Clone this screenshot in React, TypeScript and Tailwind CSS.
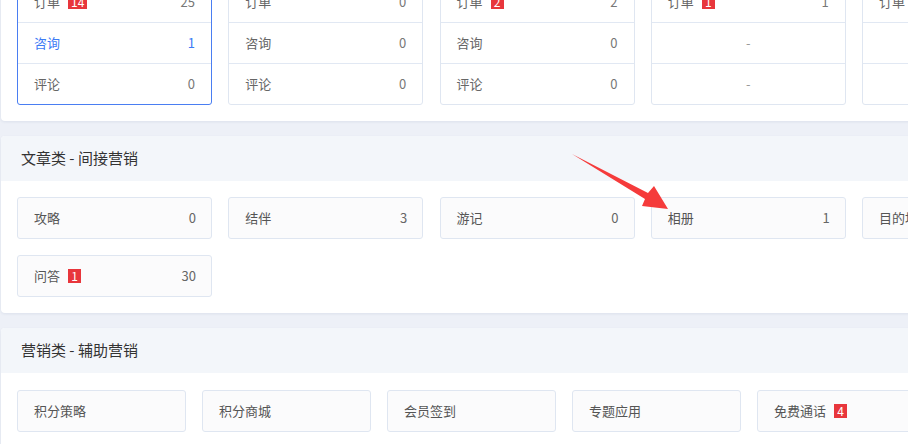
type Row = { label?: string; badge?: string; value?: string; blue?: boolean };

const font = { fontFamily: '"Noto Sans CJK SC", "Microsoft YaHei", sans-serif' };

const trade: { active?: boolean; rows: Row[] }[] = [
  {
    active: true,
    rows: [
      { label: "订单", badge: "14", value: "25" },
      { label: "咨询", value: "1", blue: true },
      { label: "评论", value: "0" },
    ],
  },
  {
    rows: [
      { label: "订单", value: "0" },
      { label: "咨询", value: "0" },
      { label: "评论", value: "0" },
    ],
  },
  {
    rows: [
      { label: "订单", badge: "2", value: "2" },
      { label: "咨询", value: "0" },
      { label: "评论", value: "0" },
    ],
  },
  {
    rows: [{ label: "订单", badge: "1", value: "1" }, {}, {}],
  },
  {
    rows: [{ label: "订单", value: "0" }, {}, {}],
  },
];

const articles: Row[] = [
  { label: "攻略", value: "0" },
  { label: "结伴", value: "3" },
  { label: "游记", value: "0" },
  { label: "相册", value: "1" },
  { label: "目的地", value: "0" },
  { label: "问答", badge: "1", value: "30" },
];

const marketing: Row[] = [
  { label: "积分策略" },
  { label: "积分商城" },
  { label: "会员签到" },
  { label: "专题应用" },
  { label: "免费通话", badge: "4" },
  { label: "优惠券" },
];

const Badge = ({ text }: { text: string }) => (
  <span className="ml-[8px] inline-flex h-[14px] min-w-[13px] items-center justify-center bg-[#e8363c] px-[3px] text-[12px] leading-none text-white">
    {text}
  </span>
);

const Panel = ({ title, children }: { title: string; children: React.ReactNode }) => (
  <section className="w-[1240px] overflow-hidden rounded-[4px] bg-white shadow-[0_1px_3px_rgba(30,50,100,0.08)]">
    <div className="flex h-[45px] items-center bg-[#f3f6fa] pl-[20px] text-[15px] text-[#333]">
      {title}
    </div>
    {children}
  </section>
);

export default function App() {
  return (
    <div className="relative h-[444px] w-[908px] overflow-hidden bg-[#edf0f7]" style={font}>
      <div className="-mt-[80px] flex flex-col gap-[15px] pl-[1px]">
        <Panel title="交易类 - 直接营销">
          <div className="flex gap-x-[16.25px] px-[16px] pb-[16px] pt-[16px]">
            {trade.map((card, i) => (
              <div
                key={i}
                className={
                  card.active
                    ? "w-[195px] shrink-0 rounded-[3px] border border-[#4a7ef2] bg-white"
                    : "w-[195px] shrink-0 rounded-[3px] border border-[#dfe6f1] bg-white"
                }
              >
                {card.rows.map((r, j) => (
                  <div
                    key={j}
                    className={
                      j < 2
                        ? "flex h-[41px] items-center border-b border-[#e1e8f3] pl-[16px] pr-[16px] text-[13px]"
                        : "flex h-[40px] items-center pl-[16px] pr-[16px] text-[13px]"
                    }
                  >
                    {r.label ? (
                      <>
                        <span className={r.blue ? "text-[#3d7bf5]" : "text-[#666]"}>{r.label}</span>
                        {r.badge && <Badge text={r.badge} />}
                        <span className={r.blue ? "ml-auto text-[#3d7bf5]" : "ml-auto text-[#777]"}>
                          {r.value}
                        </span>
                      </>
                    ) : (
                      <span className="w-full text-center text-[#999]">-</span>
                    )}
                  </div>
                ))}
              </div>
            ))}
          </div>
        </Panel>

        <Panel title="文章类 - 间接营销">
          <div className="grid grid-cols-[repeat(5,195px)] gap-x-[16.25px] gap-y-[16px] px-[16px] pb-[16px] pt-[16px]">
            {articles.map((a) => (
              <div
                key={a.label}
                className="flex h-[42px] items-center rounded-[3px] border border-[#dfe6f1] bg-[#fbfbfc] pl-[16px] pr-[15px] text-[13px]"
              >
                <span className="text-[#555]">{a.label}</span>
                {a.badge && <Badge text={a.badge} />}
                <span className="ml-auto text-[#666]">{a.value}</span>
              </div>
            ))}
          </div>
        </Panel>

        <Panel title="营销类 - 辅助营销">
          <div className="flex gap-x-[16.5px] px-[16px] pt-[17px] pb-[16px]">
            {marketing.map((m) => (
              <div
                key={m.label}
                className="flex h-[42px] w-[168.5px] shrink-0 items-center rounded-[3px] border border-[#dfe6f1] bg-[#fbfbfc] pl-[16px] text-[13px]"
              >
                <span className="text-[#555]">{m.label}</span>
                {m.badge && <Badge text={m.badge} />}
              </div>
            ))}
          </div>
        </Panel>
      </div>

      <svg
        className="pointer-events-none absolute left-0 top-0"
        width="908"
        height="444"
        viewBox="0 0 908 444"
      >
        <polygon
          points="572,154 648,193 654,186 668,209 642,206 645,199"
          fill="#f53b3b"
        />
      </svg>
    </div>
  );
}
